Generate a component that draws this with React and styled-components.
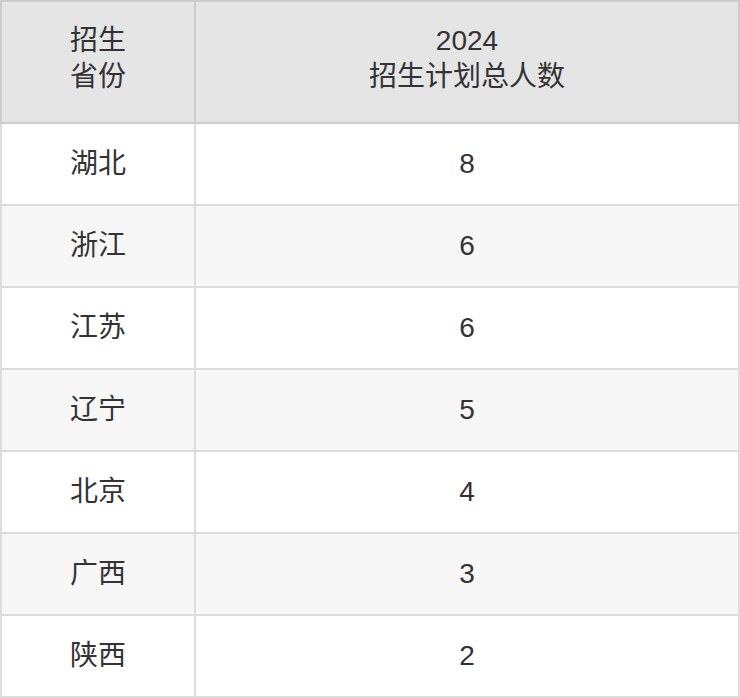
import React from "react";
import styled, { createGlobalStyle } from "styled-components";

const GlobalStyle = createGlobalStyle`
  html, body {
    margin: 0;
    padding: 0;
    background: #fff;
  }
  body {
    font-family: "Liberation Sans", "Noto Sans CJK SC", sans-serif;
  }
`;

const Table = styled.table`
  width: 740px;
  border-collapse: collapse;
  table-layout: fixed;
  color: #333;
  font-size: 28px;
`;

const HeadCell = styled.th`
  box-sizing: border-box;
  height: 122px;
  padding: 0 0 6px;
  background: #e5e5e5;
  border: 2px solid #ccc;
  font-weight: normal;
  line-height: 36px;
  text-align: center;
  vertical-align: middle;
  width: ${({ $w }) => $w || "auto"};
`;

const Row = styled.tr`
  background: ${({ $alt }) => ($alt ? "#f7f7f7" : "#fff")};
`;

const Cell = styled.td`
  box-sizing: border-box;
  height: 82px;
  padding: 0;
  border: 2px solid #ddd;
  line-height: 36px;
  text-align: center;
  vertical-align: middle;
`;

const rows = [
  ["湖北", 8],
  ["浙江", 6],
  ["江苏", 6],
  ["辽宁", 5],
  ["北京", 4],
  ["广西", 3],
  ["陕西", 2],
];

export default function App() {
  return (
    <>
      <GlobalStyle />
      <Table>
        <thead>
          <tr>
            <HeadCell $w="194px">
              招生
              <br />
              省份
            </HeadCell>
            <HeadCell>
              2024
              <br />
              招生计划总人数
            </HeadCell>
          </tr>
        </thead>
        <tbody>
          {rows.map(([name, count], i) => (
            <Row key={name} $alt={i % 2 === 1}>
              <Cell>{name}</Cell>
              <Cell>{count}</Cell>
            </Row>
          ))}
        </tbody>
      </Table>
    </>
  );
}
